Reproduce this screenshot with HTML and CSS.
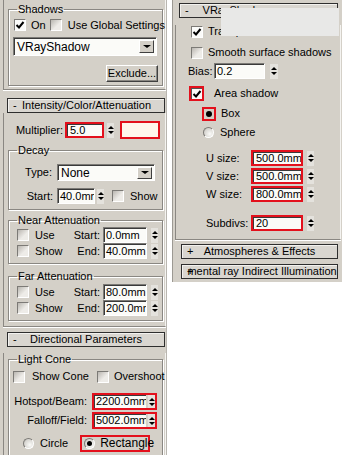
FILE: index.html
```
<!DOCTYPE html>
<html lang="en">
<head>
<meta charset="UTF-8" />
<title>Light parameters</title>
<link rel="stylesheet" href="styles.css">
</head>
<body>

<div class="screen">

  <!-- left column: shadows / intensity / directional -->
  <div class="panel left">
    <div class="roll r-top">
      <fieldset class="grp g-shadows">
        <legend>Shadows</legend>
        <div class="row r-on">
          <span class="chk on"><svg viewBox="0 0 10 10"><path d="M1.5 5 L4 7.5 L8.5 2" /></svg></span>
          <span class="lbl l-on">On</span>
          <span class="chk c-global"></span>
          <span class="lbl l-global">Use Global Settings</span>
        </div>
        <div class="drop d-shadow"><span class="val">VRayShadow</span><i class="arrow"></i></div>
        <div class="row r-excl"><span class="btn">Exclude...</span></div>
      </fieldset>
    </div>

    <div class="head h-left"><span class="sign">-</span><span class="ttl">Intensity/Color/Attenuation</span></div>
    <div class="roll r-int">
      <div class="row r-mult">
        <span class="lbl l-mult">Multiplier:</span>
        <span class="fld hl f-mult">5.0</span>
        <span class="spin s-mult"></span>
        <span class="swatch"></span>
      </div>

      <fieldset class="grp g-decay">
        <legend>Decay</legend>
        <div class="row r-type">
          <span class="lbl l-type">Type:</span>
          <div class="drop d-type"><span class="val">None</span><i class="arrow"></i></div>
        </div>
        <div class="row r-start">
          <span class="lbl l-start">Start:</span>
          <span class="fld f-start">40.0mm</span>
          <span class="spin s-start"></span>
          <span class="chk c-show"></span>
          <span class="lbl l-show">Show</span>
        </div>
      </fieldset>

      <fieldset class="grp g-near">
        <legend>Near Attenuation</legend>
        <div class="row r-att first">
          <span class="opt"><span class="chk"></span><span class="lbl">Use</span></span>
          <span class="lbl l-att">Start:</span>
          <span class="fld f-att">0.0mm</span>
          <span class="spin s-att"></span>
        </div>
        <div class="row r-att">
          <span class="opt"><span class="chk"></span><span class="lbl">Show</span></span>
          <span class="lbl l-att">End:</span>
          <span class="fld f-att">40.0mm</span>
          <span class="spin s-att"></span>
        </div>
      </fieldset>

      <fieldset class="grp g-far">
        <legend>Far Attenuation</legend>
        <div class="row r-att first">
          <span class="opt"><span class="chk"></span><span class="lbl">Use</span></span>
          <span class="lbl l-att">Start:</span>
          <span class="fld f-att">80.0mm</span>
          <span class="spin s-att"></span>
        </div>
        <div class="row r-att">
          <span class="opt"><span class="chk"></span><span class="lbl">Show</span></span>
          <span class="lbl l-att">End:</span>
          <span class="fld f-att">200.0mm</span>
          <span class="spin s-att"></span>
        </div>
      </fieldset>
    </div>

    <div class="head h-left h-dir"><span class="sign">-</span><span class="ttl">Directional Parameters</span></div>
    <div class="roll r-dir">
      <fieldset class="grp g-cone">
        <legend>Light Cone</legend>
        <div class="row r-cone">
          <span class="chk c-cone"></span><span class="lbl l-cone">Show Cone</span>
          <span class="chk c-over"></span><span class="lbl l-over">Overshoot</span>
        </div>
        <div class="row r-beam">
          <span class="lbl l-beam">Hotspot/Beam:</span>
          <span class="hlbox"><span class="fld f-beam">2200.0mm</span><span class="spin"></span></span>
        </div>
        <div class="row r-beam r-fall">
          <span class="lbl l-beam">Falloff/Field:</span>
          <span class="hlbox"><span class="fld f-beam">5002.0mm</span><span class="spin"></span></span>
        </div>
        <div class="row r-shape">
          <span class="rad r-circle"></span><span class="lbl l-circle">Circle</span>
          <span class="hlbox h-rect"><span class="rad on"></span><span class="lbl l-rect">Rectangle</span></span>
        </div>
      </fieldset>
    </div>
  </div>

  <!-- right column: vray shadow params -->
  <div class="panel right">
    <div class="head h-vray"><span class="sign">-</span><span class="ttl">VRayShadows params</span></div>
    <div class="roll r-vray">
      <div class="row r-tr">
        <span class="chk on"><svg viewBox="0 0 10 10"><path d="M1.5 5 L4 7.5 L8.5 2" /></svg></span>
        <span class="lbl">Transparent shadows</span>
      </div>
      <div class="row r-smooth">
        <span class="chk"></span>
        <span class="lbl">Smooth surface shadows</span>
      </div>
      <div class="row r-bias">
        <span class="lbl l-bias">Bias:</span>
        <span class="fld f-bias">0.2</span>
        <span class="spin s-bias"></span>
      </div>
      <div class="row r-area">
        <span class="chk on hl"><svg viewBox="0 0 10 10"><path d="M1.5 5 L4 7.5 L8.5 2" /></svg></span>
        <span class="lbl l-area">Area shadow</span>
      </div>
      <div class="row r-box">
        <span class="rad on hl"></span>
        <span class="lbl">Box</span>
      </div>
      <div class="row r-sphere">
        <span class="rad"></span>
        <span class="lbl">Sphere</span>
      </div>
      <div class="row r-size first">
        <span class="lbl l-size">U size:</span>
        <span class="fld hl f-size">500.0mm</span>
        <span class="spin s-size"></span>
      </div>
      <div class="row r-size">
        <span class="lbl l-size">V size:</span>
        <span class="fld hl f-size">500.0mm</span>
        <span class="spin s-size"></span>
      </div>
      <div class="row r-size">
        <span class="lbl l-size">W size:</span>
        <span class="fld hl f-size">800.0mm</span>
        <span class="spin s-size"></span>
      </div>
      <div class="row r-size r-subdiv">
        <span class="lbl l-size">Subdivs:</span>
        <span class="fld hl f-size">20</span>
        <span class="spin s-size"></span>
      </div>
    </div>
    <div class="head h-sub"><span class="sign">+</span><span class="ttl">Atmospheres &amp; Effects</span></div>
    <div class="head h-sub tight"><span class="sign">+</span><span class="ttl">mental ray Indirect Illumination</span></div>

    <div class="patch"></div>
  </div>

</div>

</body>
</html>
```

FILE: styles.css
```
body {
  margin: 0;
  background: #fff;
  font-family: "Liberation Sans", Arial, sans-serif;
  font-size: 11px;
  color: #000;
}
.screen {
  display: flex;
  align-items: flex-start;
  width: 342px;
  height: 455px;
  overflow: hidden;
}

/* panels */
.panel {
  background: #d4d0c8;
  box-sizing: border-box;
}
.panel.left {
  width: 167px;
  height: 455px;
  border-right: 1px solid #b9b6b0;
}
.panel.right {
  position: relative;
  width: 170px;
  margin-left: 5px;
  padding: 3px 0 3px;
  border-left: 1px solid #9c9993;
}

.roll {
  box-sizing: border-box;
  border-left: 1px solid #8a8782;
  border-right: 1px solid #f4f3f0;
  border-bottom: 1px solid #8a8782;
  box-shadow: 0 1px 0 #fff;
}
.left .roll {
  width: 163px;
  margin-left: 3px;
  padding: 0 2px 0 4px;
}
.r-top { padding-top: 3px !important; padding-bottom: 3px !important; }
.r-int { padding-top: 8px !important; padding-bottom: 5px !important; }
.r-dir { border-bottom: none; box-shadow: none; height: 108px; }

.right .roll {
  width: 166px;
  margin-left: 2px;
  padding: 0 0 8px 0;
}

/* rollout headers */
.head {
  box-sizing: border-box;
  height: 15px;
  display: flex;
  align-items: center;
  background: #d9d6d0;
  border: 1px solid #2e2e2e;
  box-shadow: inset 1px 1px 0 #f2f1ee;
  line-height: 13px;
  white-space: nowrap;
  overflow: hidden;
}
.head .sign {
  box-sizing: border-box;
  width: 14px;
  padding-left: 5px;
  flex: none;
}
.head .ttl {
  flex: 1;
  text-align: center;
}
.head::after {
  content: "";
  width: 14px;
  flex: none;
}
.h-left {
  width: 158px;
  margin: 8px 0 0 7px;
}
.h-dir { margin-top: 5px; }
.h-vray {
  width: 159px;
  margin-left: 6px;
}
.h-sub {
  width: 157px;
  margin: 4px 0 0 8px;
}
.h-sub.tight { margin-top: 5px; }
.tight .sign {
  width: auto;
  padding-left: 5px;
  margin-right: -6px;
}
.tight .ttl { text-align: left; }
.tight::after { display: none; }

/* group boxes */
.grp {
  box-sizing: border-box;
  width: 155px;
  margin: 0;
  padding: 0 0 4px;
  min-width: 0;
  border: 1px solid #8a8782;
  box-shadow: 1px 1px 0 #fff, inset 1px 1px 0 #fff;
}
.grp legend {
  padding: 0 1px;
  margin-left: 8px;
  line-height: 12px;
}
.g-shadows { padding-bottom: 3px; }
.g-decay { margin-top: 5px; padding-bottom: 5px; }
.g-near { margin-top: 4px; }
.g-far { margin-top: 6px; }
.g-cone { margin-top: 6px; border-bottom: none; height: 140px; }

/* rows */
.row {
  display: flex;
  align-items: center;
  white-space: nowrap;
}
.lbl { line-height: 13px; }

/* checkbox */
.chk {
  box-sizing: border-box;
  flex: none;
  width: 12px;
  height: 12px;
  border: 1px solid;
  border-color: #7c7a76 #fff #fff #7c7a76;
  background: linear-gradient(135deg, #b9b6b0, #eeece8 60%);
}
.chk.on { background: #fbfbf9; }
.chk svg { display: block; width: 10px; height: 10px; }
.chk path { fill: none; stroke: #000; stroke-width: 2; }
.chk.hl {
  width: 15px;
  height: 15px;
  border: 2px solid #e3101c;
  box-shadow: inset 1px 1px 0 #555;
}
.chk.hl svg { margin: 1px 0 0 1px; }

/* radio */
.rad {
  box-sizing: border-box;
  flex: none;
  width: 11px;
  height: 11px;
  border-radius: 50%;
  border: 1px solid;
  border-color: #7c7a76 #fff #fff #7c7a76;
  background: radial-gradient(circle at 65% 65%, #fbfbf9, #c4c1bb);
  display: flex;
  align-items: center;
  justify-content: center;
}
.rad.on::after {
  content: "";
  width: 5px;
  height: 5px;
  border-radius: 50%;
  background: #000;
}
.rad.hl {
  width: 14px;
  height: 14px;
  border-radius: 0;
  border: 2px solid #e3101c;
  background: #d4d0c8;
}
.rad.hl::after { width: 6px; height: 6px; }

/* fields, spinners, dropdowns */
.fld {
  box-sizing: border-box;
  flex: none;
  height: 16px;
  padding-left: 2px;
  line-height: 14px;
  background: #fbfbf8;
  border: 1px solid;
  border-color: #7c7a76 #fff #fff #7c7a76;
  box-shadow: inset 1px 1px 0 #3a3a3a;
  overflow: hidden;
}
.fld.hl {
  border: 2px solid #e3101c;
  line-height: 12px;
  padding-left: 3px;
}
.spin {
  box-sizing: border-box;
  flex: none;
  width: 7px;
  height: 15px;
  display: flex;
  flex-direction: column;
  align-items: center;
  justify-content: center;
  gap: 2px;
  background: #e4e2dd;
}
.spin::before,
.spin::after {
  content: "";
  border-left: 3px solid transparent;
  border-right: 3px solid transparent;
}
.spin::before { border-bottom: 3px solid #000; }
.spin::after { border-top: 3px solid #000; }

.drop {
  box-sizing: border-box;
  display: flex;
  align-items: center;
  background: #fbfbf8;
  border: 1px solid;
  border-color: #7c7a76 #fff #fff #7c7a76;
  box-shadow: inset 1px 1px 0 #3a3a3a;
  padding: 0 2px 0 3px;
}
.drop .val { flex: 1; font-size: 12px; }
.drop .arrow {
  box-sizing: border-box;
  width: 15px;
  height: 13px;
  background: #d4d0c8;
  border: 1px solid;
  border-color: #fff #404040 #404040 #fff;
  display: flex;
  align-items: center;
  justify-content: center;
}
.drop .arrow::after {
  content: "";
  border-left: 4px solid transparent;
  border-right: 4px solid transparent;
  border-top: 3px solid #000;
}

.btn {
  box-sizing: border-box;
  width: 52px;
  height: 17px;
  line-height: 14px;
  text-align: center;
  background: #d4d0c8;
  border: 1px solid;
  border-color: #fff #404040 #404040 #fff;
  box-shadow: inset -1px -1px 0 #8a8782;
}

.hlbox {
  box-sizing: border-box;
  display: flex;
  align-items: center;
  height: 17px;
  border: 2px solid #e3101c;
}

/* shadows group */
.r-on { margin-top: 3px; height: 14px; }
.r-on .chk.on { margin-left: 5px; }
.l-on { margin-left: 5px; }
.c-global { margin-left: 4px; }
.l-global { margin-left: 6px; }
.d-shadow {
  width: 144px;
  height: 19px;
  margin: 5px 0 0 4px;
}
.r-excl {
  justify-content: flex-end;
  margin: 9px 4px 0 0;
}

/* intensity */
.r-mult { height: 18px; }
.l-mult { width: 55px; text-align: right; }
.f-mult { width: 39px; margin-left: 2px; }
.s-mult { margin-left: 3px; }
.swatch {
  box-sizing: border-box;
  width: 40px;
  height: 18px;
  margin-left: 6px;
  background: #fff6ec;
  border: 2px solid #e3101c;
}

.r-type { margin-top: 8px; height: 17px; }
.l-type { width: 43px; text-align: right; }
.d-type { width: 98px; height: 17px; margin-left: 5px; }
.d-type .arrow { height: 12px; }

.r-start { margin-top: 7px; height: 16px; }
.l-start { width: 44px; text-align: right; }
.f-start { width: 38px; margin-left: 4px; }
.s-start { margin-left: 2px; }
.c-show { margin-left: 8px; }
.l-show { margin-left: 6px; }

.r-att { height: 16px; }
.r-att.first { margin-top: 1px; }
.g-far .r-att.first { margin-top: 2px; }
.opt {
  display: flex;
  align-items: center;
  width: 61px;
}
.opt .chk { margin-left: 8px; }
.opt .lbl { margin-left: 6px; }
.l-att { width: 30px; text-align: right; }
.f-att { width: 44px; margin-left: 3px; }
.s-att { margin-left: 4px; }

/* directional */
.r-cone { margin-top: 5px; height: 13px; }
.c-cone { margin-left: 4px; }
.l-cone { margin-left: 7px; }
.c-over { margin-left: 8px; }
.l-over { margin-left: 5px; }

.r-beam { margin-top: 10px; height: 17px; }
.r-fall { margin-top: 2px; }
.l-beam { width: 78px; text-align: right; }
.r-beam .hlbox { width: 65px; margin-left: 5px; }
.f-beam {
  width: 52px;
  height: 13px;
  line-height: 12px;
  border: none;
  box-shadow: inset 1px 1px 0 #3a3a3a;
}
.r-beam .spin { margin-left: 2px; height: 13px; }

.r-shape { margin-top: 6px; height: 17px; }
.r-circle { margin-left: 14px; }
.l-circle { margin-left: 6px; }
.h-rect { width: 70px; margin-left: 12px; padding-left: 2px; }
.l-rect { margin-left: 5px; font-size: 12px; }

/* vray params */
.r-tr { margin-top: 7px; height: 13px; }
.r-smooth { margin-top: 8px; height: 13px; }
.r-tr .chk, .r-smooth .chk { margin-left: 15px; }
.r-tr .lbl, .r-smooth .lbl { margin-left: 5px; }

.r-bias { margin-top: 4px; height: 16px; }
.l-bias { margin-left: 12px; width: 26px; }
.f-bias { width: 51px; }
.s-bias { margin-left: 5px; width: 8px; }

.r-area { margin-top: 7px; height: 15px; }
.r-area .chk { margin-left: 13px; }
.l-area { margin-left: 10px; }

.r-box { margin-top: 5px; height: 15px; }
.r-box .rad { margin-left: 26px; }
.r-box .lbl { margin-left: 5px; }
.r-sphere { margin-top: 5px; height: 13px; }
.r-sphere .rad { margin-left: 27px; }
.r-sphere .lbl { margin-left: 6px; }

.r-size { margin-top: 2px; height: 16px; }
.r-size.first { margin-top: 11px; }
.r-subdiv { margin-top: 13px; }
.l-size { width: 45px; margin-left: 30px; }
.f-size { width: 52px; }
.s-size { margin-left: 4px; }

/* pasted-over strip on the right panel */
.patch {
  position: absolute;
  left: 48px;
  top: 8px;
  width: 118px;
  height: 28px;
  background: #e8e8e7;
}
```
